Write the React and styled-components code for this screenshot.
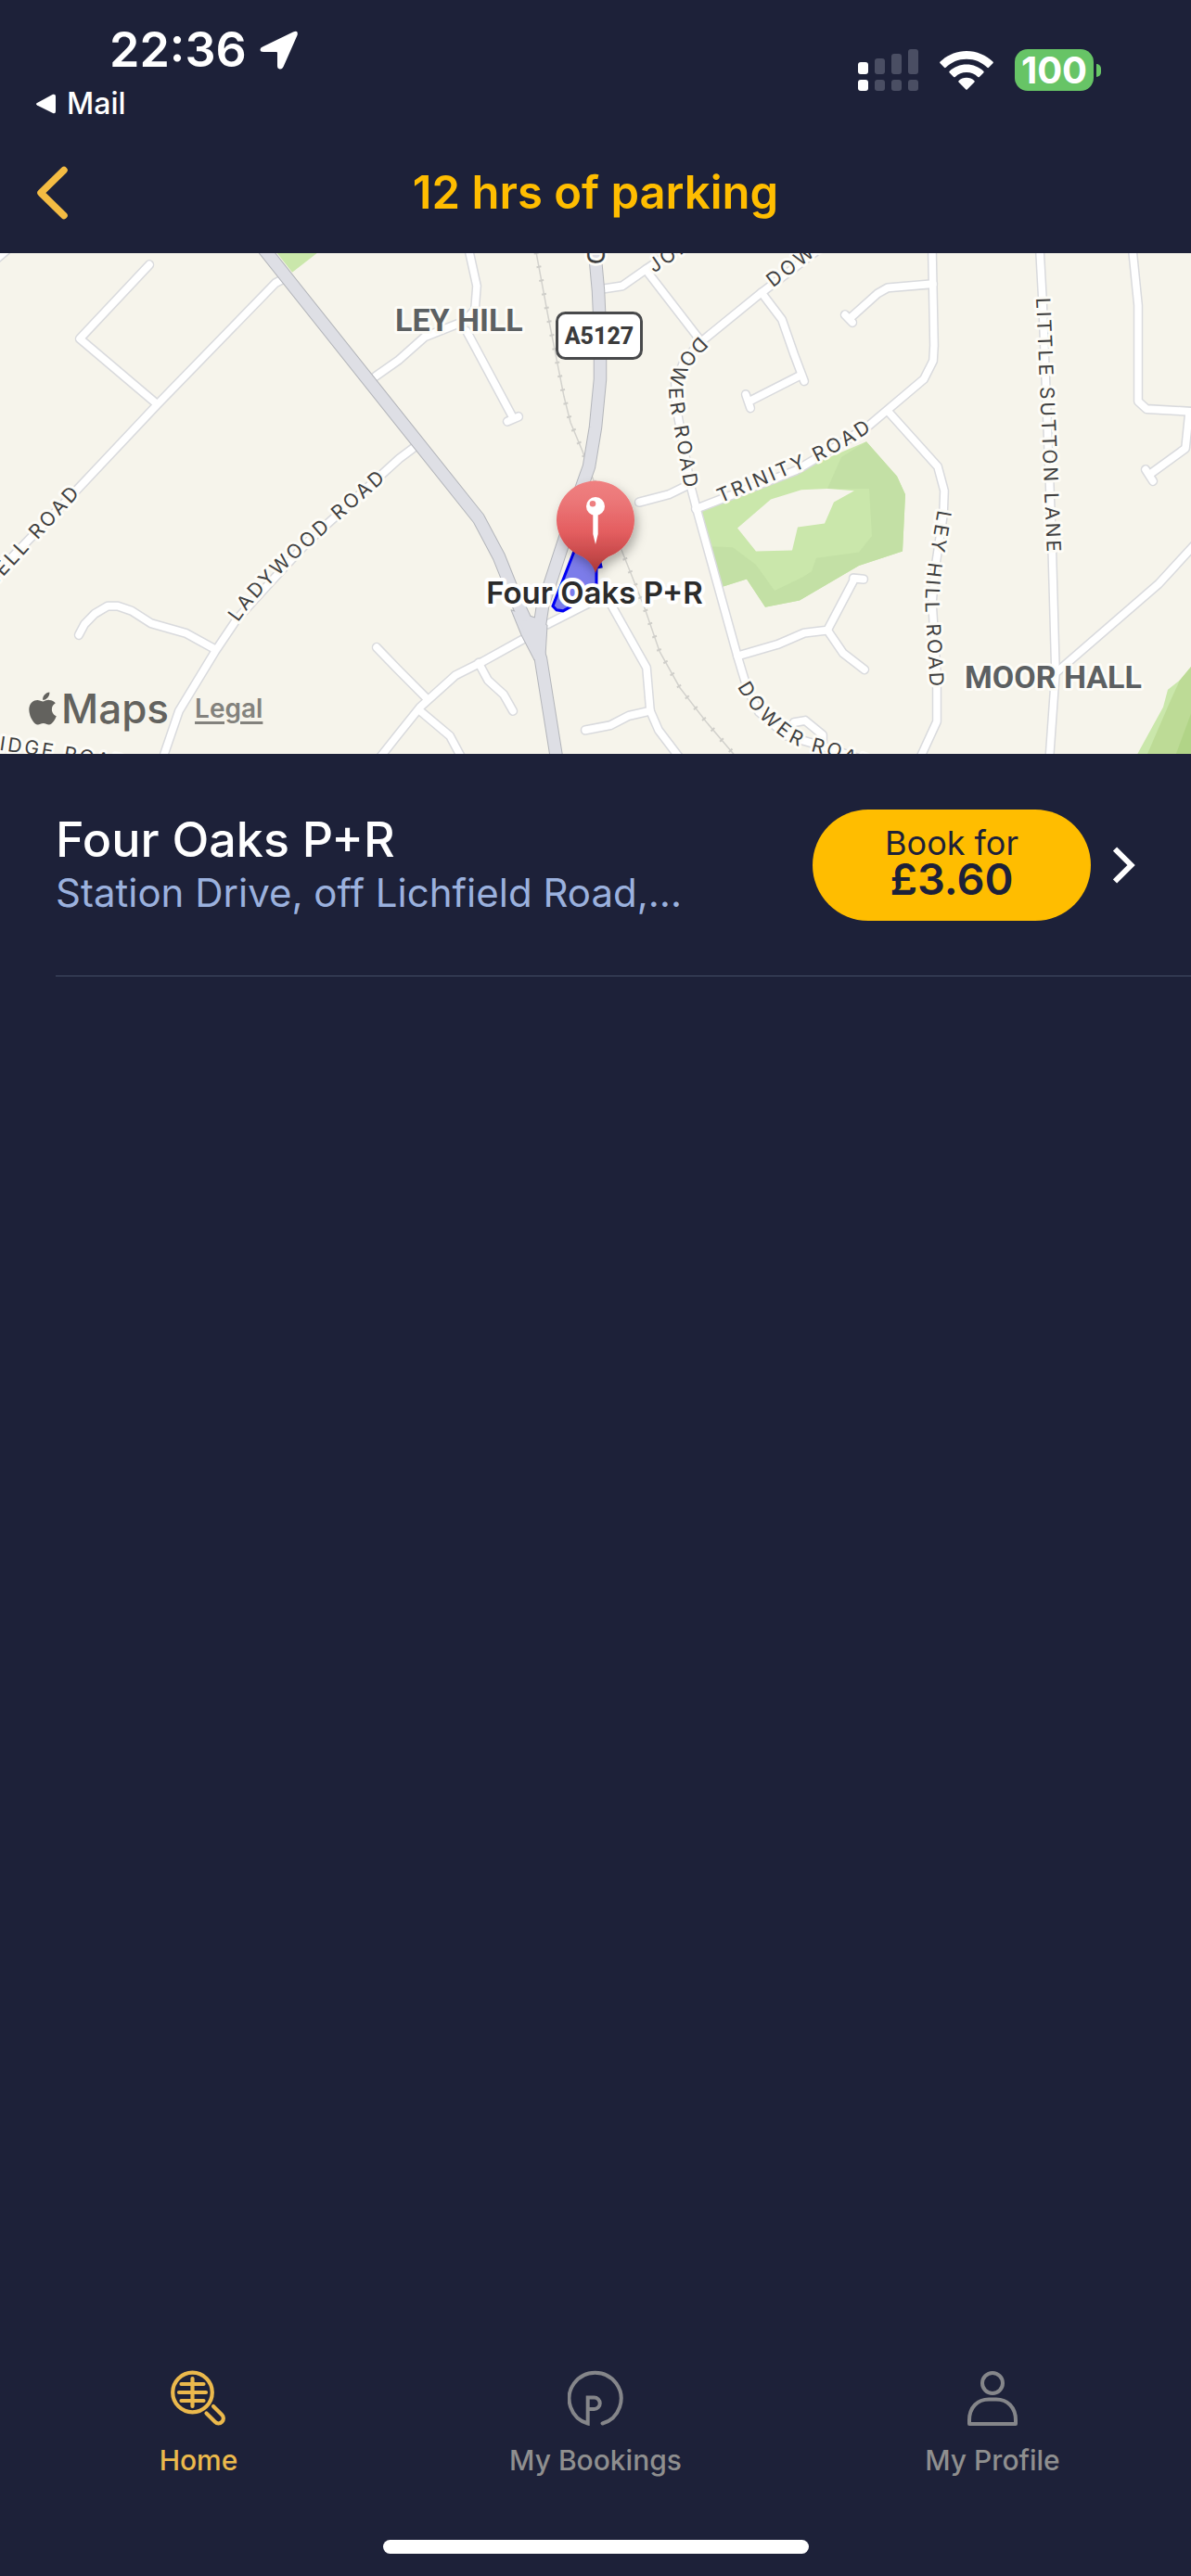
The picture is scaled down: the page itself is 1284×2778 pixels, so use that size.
import React, { useState } from 'react';
import styled, { createGlobalStyle, css } from 'styled-components';
import { FaApple } from 'react-icons/fa';

const GlobalStyle = createGlobalStyle`
    * {
        box-sizing: border-box;
    }
    body {
        margin: 0;
        background: #1d2139;
        font-family: Inter, "Liberation Sans", sans-serif;
    }
    button {
        padding: 0;
        border: none;
        background: none;
        font-family: inherit;
        cursor: pointer;
    }
`;

const Page = styled.div`
    display: flex;
    flex-direction: column;
    min-height: 100vh;
    color: #fff;
`;

const StatusBar = styled.div`
    display: flex;
    justify-content: space-between;
    height: 142px;
    padding: 24px 97px 0 38px;
`;

const StatusLeft = styled.div`
    display: flex;
    flex-direction: column;
    align-items: flex-start;
    gap: 6px;
`;

const Time = styled.div`
    display: flex;
    align-items: center;
    gap: 14px;
    padding-left: 80px;
    font-size: 52px;
    font-weight: 600;
    line-height: 60px;
`;

const BackToApp = styled.button`
    display: flex;
    align-items: center;
    gap: 11px;
    color: #fff;
    font-size: 32px;
    font-weight: 500;
    line-height: 44px;
`;

const StatusRight = styled.div`
    display: flex;
    align-items: center;
    gap: 23px;
    height: 45px;
    margin-top: 29px;
`;

const Battery = styled.div`
    display: flex;
    align-items: center;
    gap: 3px;
`;

const BatteryLevel = styled.div`
    width: 85px;
    height: 45px;
    border-radius: 14px;
    background: #67c466;
    font-size: 40px;
    font-weight: 700;
    line-height: 45px;
    text-align: center;
`;

const BatteryNub = styled.div`
    width: 5px;
    height: 14px;
    border-radius: 0 6px 6px 0;
    background: #67c466;
`;

const NavBar = styled.header`
    display: grid;
    grid-template-columns: 80px 1fr 80px;
    align-items: center;
    height: 131px;
`;

const BackButton = styled.button`
    display: flex;
    padding-left: 38px;
`;

const Title = styled.h1`
    margin: 0;
    color: #ffbd00;
    font-size: 49px;
    font-weight: 600;
    line-height: 60px;
    text-align: center;
`;

const MapBox = styled.section`
    position: relative;
    height: 540px;
    background: #f6f4eb;
    overflow: hidden;
`;

const MapSvg = styled.svg`
    display: block;
    width: 100%;
    height: 100%;
`;

const StreetName = styled.text`
    fill: #3f3f3f;
    font-size: ${props => (props.$major ? '25px' : '21px')};
    font-weight: ${props => (props.$major ? 500 : 400)};
    letter-spacing: 3px;
    stroke: #fdfcf7;
    stroke-width: 6px;
    stroke-linejoin: round;
    paint-order: stroke;
`;

const PlaceName = styled.text`
    fill: #5c6062;
    font-family: "Liberation Sans Narrow", Roboto, sans-serif;
    font-size: 34px;
    font-weight: 700;
    stroke: #fdfcf7;
    stroke-width: 6px;
    stroke-linejoin: round;
    paint-order: stroke;
`;

const RoadNumber = styled.text`
    fill: #3b3b3c;
    font-family: "Liberation Sans Narrow", Roboto, sans-serif;
    font-size: 25px;
    font-weight: 800;
    text-anchor: middle;
`;

const PinName = styled.text`
    fill: #2b2b2b;
    font-size: 33px;
    font-weight: 600;
    text-anchor: middle;
    stroke: #fff;
    stroke-width: 8px;
    stroke-linejoin: round;
    paint-order: stroke;
`;

const Attribution = styled.div`
    position: absolute;
    left: 26px;
    bottom: 22px;
    display: flex;
    align-items: center;
    color: #63625e;
    font-size: 44px;
    font-weight: 500;
    line-height: 54px;
`;

const Legal = styled.a`
    margin-left: 28px;
    color: #83827d;
    font-size: 28px;
    font-weight: 600;
    text-decoration-thickness: 3px;
    text-underline-offset: 4px;
`;

const List = styled.ul`
    flex: 1;
    margin: 0;
    padding: 0;
    list-style: none;
`;

const CarPark = styled.li`
    display: flex;
    align-items: center;
    height: 240px;
    margin-left: 60px;
    padding-right: 60px;
    border-bottom: 1px solid #434e66;
`;

const Info = styled.div`
    flex: 1;
    min-width: 0;
    margin-right: 90px;
`;

const Name = styled.h2`
    margin: 0;
    font-size: 52px;
    font-weight: 500;
    line-height: 60px;
`;

const Address = styled.p`
    margin: 0;
    color: #9bb1de;
    font-size: 42px;
    font-weight: 400;
    line-height: 54px;
    white-space: nowrap;
    overflow: hidden;
    text-overflow: ellipsis;
`;

const BookButton = styled.button`
    display: flex;
    flex-direction: column;
    align-items: center;
    justify-content: center;
    width: 300px;
    height: 120px;
    padding-bottom: 8px;
    border-radius: 60px;
    background: #ffbd00;
    color: #1d2139;
    font-size: 36px;
    line-height: 38px;
`;

const Price = styled.strong`
    font-size: 47px;
    font-weight: 600;
    line-height: 40px;
`;

const MoreButton = styled.button`
    display: flex;
    margin-left: 24px;
`;

const TabBar = styled.nav`
    display: grid;
    grid-template-columns: repeat(3, 1fr);
`;

const Tab = styled.button`
    display: flex;
    flex-direction: column;
    align-items: center;
    gap: 19px;
    color: #8f8f8f;
    font-size: 30px;
    font-weight: 500;
    line-height: 36px;
    svg {
        color: #85868a;
    }
    ${props =>
        props.$active &&
        css`
            color: #ebb94c;
            svg {
                color: #ebb94c;
            }
        `}
`;

const HomeIndicator = styled.div`
    align-self: center;
    width: 459px;
    height: 15px;
    margin: 68px 0 24px;
    border-radius: 8px;
    background: #fff;
`;

const streets = [
    'M-4 7L7 -2',
    'M161 13L86 90L168 157',
    'M305 28L297 32L170 158L82 248L-7 337',
    'M172 550L177 522L193 477L232 415L255 382L287 348L333 300L430 215L445 204',
    'M85 398L91 387L102 376L116 368L127 368L142 373L163 386L200 396L232 413',
    'M405 129L430 112L458 88L500 72L512 60L514 35L506 0',
    'M503 82L553 172',
    'M547 176L559 171',
    'M406 411L428 433L461 465',
    'M410 525L428 503L453 473L491 440L520 426L563 403',
    'M453 477L485 503L500 530',
    'M516 427L526 445L543 460L553 477',
    'M590 387L645 360',
    'M655 360L697 432L701 477L710 497L736 530',
    'M631 497L658 492L678 482L701 477',
    'M689 260L721 252L740 243',
    'M884 -4L821 42L756 93L738 112L728 135L729 160L745 245L751 267L795 420L806 455L818 478L848 503L888 514L930 528',
    'M651 38L671 35L696 18L730 -4',
    'M696 18L756 93',
    'M821 42L843 70L856 106L867 134',
    'M808 155L863 128',
    'M804 148L809 162',
    'M750 267L858 227L905 200L937 180L996 132L1006 113L1007 97L1005 0',
    'M1006 33L957 37L946 43L916 69',
    'M911 65L919 73',
    'M957 165L1011 223L1018 248L1017 273L1008 330L1005 365L1007 395L1010 440L1010 488L990 530',
    'M1121 -2L1124 50L1134 300L1138 437L1130 545',
    'M1140 436L1249 345L1290 302',
    'M1221 -2L1227 55L1227 155L1236 163L1290 166',
    'M1282 167L1278 204L1241 230',
    'M1235 226L1243 238',
    'M795 420L838 408L867 396L892 393L921 340',
    'M920 339L931 340',
    'M892 393L909 417L932 434',
    'M848 502L856 489L868 487L887 502L887 514',
];

const mainRoads = [
    'M284 -4L430 173L516 277L538 317L558 365L574 398L583 423L604 550',
    'M641 -2L645 40L647 83L647 132L642 182L635 223L625 250L585 368L580 400',
];

const rail = 'M578 0L591 67L608 150L615 177L628 207L641 240L671 312L695 370L711 415L733 453L761 488L791 522L800 532';

const labels = [
    { id: 'bushell', d: 'M-190 549L83 254', text: 'BUSHELL ROAD', end: true },
    { id: 'ladywood', d: 'M251 395C283 349 330 312 437 217', text: 'LADYWOOD ROAD' },
    { id: 'bridge', d: 'M-33 525L36 535L144 553', text: 'BRIDGE ROAD' },
    { id: 'jordan', d: 'M701 17L760 -23', text: 'JORDAN' },
    { id: 'dower-top', d: 'M829 33L900 -22', text: 'DOWER' },
    { id: 'dower', d: 'M759 95C736 116 725 135 729 161L750 282', text: 'DOWER ROAD' },
    { id: 'trinity', d: 'M774 264L862 227Q905 208 950 177', text: 'TRINITY ROAD' },
    { id: 'leyhill', d: 'M1018 279L1007 342Q1003 373 1006 404L1011 490', text: 'LEY HILL ROAD' },
    { id: 'sutton', d: 'M1124 49L1137 350', text: 'LITTLE SUTTON LANE' },
    { id: 'dower-low', d: 'M801 465Q815 493 850 519Q866 530 896 536L960 562', text: 'DOWER ROAD' },
];

function Pin() {
    return (
        <g>
            <path
                d="M642 346c-3-9-8-15-17-19a42 42 0 1 1 34 0c-9 4-14 10-17 19z"
                fill="url(#pinFill)"
                filter="url(#pinShadow)"
            />
            <circle cx="642" cy="274" r="10" fill="#fff" />
            <path d="M639.300 282h5.400v22l-2.700 11l-2.700-11z" fill="#fff" />
            <circle cx="639" cy="271.300" r="3.300" fill="#ee7f80" />
        </g>
    );
}

function MapView() {
    return (
        <MapBox>
            <MapSvg viewBox="0 1 1284 540" preserveAspectRatio="xMidYMid slice" role="img" aria-label="Map">
                <defs>
                    <linearGradient id="pinFill" x1="0" y1="0" x2="0" y2="1">
                        <stop offset="0" stopColor="#ef8080" />
                        <stop offset="0.200" stopColor="#ec7879" />
                        <stop offset="0.550" stopColor="#e45e60" />
                        <stop offset="0.800" stopColor="#c84a4b" />
                        <stop offset="1" stopColor="#a83837" />
                    </linearGradient>
                    <filter id="pinShadow" x="-30%" y="-30%" width="170%" height="170%">
                        <feDropShadow dx="3" dy="6" stdDeviation="6" floodColor="#000" floodOpacity="0.300" />
                    </filter>
                </defs>

                <g transform="scale(1 1.037)">
                    <path d="M298 0H343L315 21z" fill="#cae7ab" />
                    <path
                        d="M753 270L858 228L934 197L967 233L976 252L973 311L926 326L862 362L825 369L805 340L778 348L766 307z"
                        fill="#cae7ab"
                    />
                    <path
                        d="M766 306L790 307L815 325L835 352L865 338L875 332L880 318L926 312L940 295L937 246L892 246L907 213L934 197L967 233L976 252L973 311L926 326L862 362L825 369L805 340L778 348z"
                        fill="#c3e0a5"
                    />
                    <path
                        d="M795 287L831 257L864 247L892 246L921 248L899 260L889 282L860 286L854 310L815 311z"
                        fill="#f6f4eb"
                    />
                    <path d="M1225 524L1254 473L1259 455L1272 445L1290 424V545z" fill="#cae7ab" />
                    <path d="M1236 524L1262 466L1272 445L1290 424V545z" fill="#bddb96" />
                    <path d="M1259 545L1290 464V545z" fill="#b1d487" />

                    <g fill="none" strokeLinejoin="round">
                        <path d={rail} stroke="#d3d2cd" strokeWidth="1.500" />
                        <path d={rail} stroke="#cfcec9" strokeWidth="5" strokeDasharray="2 12.500" />
                        <g strokeLinecap="round">
                            {streets.map(d => <path key={d} d={d} stroke="#d9dadd" strokeWidth="10.500" />)}
                            {streets.map(d => <path key={d} d={d} stroke="#fff" strokeWidth="7.500" />)}
                        </g>
                        {mainRoads.map(d => <path key={d} d={d} stroke="#b3b5ba" strokeWidth="14.500" />)}
                        <path d="M551 372L577 380L590 388L588 420L576 424L562 398z" fill="#dedfe5" stroke="#b3b5ba" />
                        {mainRoads.map(d => <path key={d} d={d} stroke="#dedfe5" strokeWidth="12.500" />)}
                    </g>
                    <path d="M562 384L577 381L587 388L585 416L576 418z" fill="#dedfe5" />

                    <path
                        d="M621 306L596 368L600 372L607 373L611 371L643 353V328L648 327L643 306z"
                        fill="#7c7cea"
                        stroke="#0000f5"
                        strokeWidth="3"
                    />
                </g>

                {labels.map(({ id, d, text, end }) => (
                    <React.Fragment key={id}>
                        <path id={id} d={d} fill="none" />
                        <StreetName dy="7" textAnchor={end ? 'end' : 'start'}>
                            <textPath href={`#${id}`} startOffset={end ? '100%' : '0'}>{text}</textPath>
                        </StreetName>
                    </React.Fragment>
                ))}
                <StreetName $major transform="translate(633 -5) rotate(90)">D</StreetName>
                <PlaceName x="426" y="85">LEY HILL</PlaceName>
                <PlaceName x="1040" y="470">MOOR HALL</PlaceName>

                <rect x="600.500" y="65.500" width="91" height="49" rx="9" fill="#fff" stroke="#48494b" strokeWidth="3" />
                <RoadNumber x="646" y="99">A5127</RoadNumber>

                <PinName x="641" y="379">Four Oaks P+R</PinName>
                <Pin />
            </MapSvg>
            <Attribution>
                <FaApple size={40} />
                Maps
                <Legal href="#legal">Legal</Legal>
            </Attribution>
        </MapBox>
    );
}

function SignalIcon() {
    const bars = [[0, 14], [18, 10], [36, 5], [54, 0]];
    return (
        <svg width="65" height="45" viewBox="0 0 65 45">
            {bars.map(([x, y], i) => (
                <g key={x} fill={i === 0 ? '#fff' : '#4a4e63'}>
                    <rect x={x} y={y} width="11" height={27 - y} rx="3" />
                    <rect x={x} y="33" width="11" height="12" rx="3" />
                </g>
            ))}
        </svg>
    );
}

function WifiIcon() {
    return (
        <svg width="58" height="42" viewBox="0 0 58 42" fill="#fff">
            <path d="M29 0C18 0 8 4.500 0.600 11.600a1.200 1.200 0 0 0 0 1.700L5 17.700a1.200 1.200 0 0 0 1.700 0C12.500 12 20.300 8.700 29 8.700s16.500 3.300 22.300 9a1.200 1.200 0 0 0 1.700 0l4.400-4.400a1.200 1.200 0 0 0 0-1.700C50 4.500 40 0 29 0z" />
            <path d="M29 14.500c-7 0-13.500 2.700-18.300 7.200a1.200 1.200 0 0 0 0 1.800l4.400 4.400a1.200 1.200 0 0 0 1.700 0C20 24.900 24.300 23.100 29 23.100s9 1.800 12.200 4.800a1.200 1.200 0 0 0 1.700 0l4.400-4.400a1.200 1.200 0 0 0 0-1.800C42.500 17.200 36 14.500 29 14.500z" />
            <path d="M29 28.800c-3.200 0-6.100 1.200-8.300 3.100a1.200 1.200 0 0 0 0 1.800l7.400 7.500a1.200 1.200 0 0 0 1.800 0l7.400-7.500a1.200 1.200 0 0 0 0-1.800C35.100 30 32.200 28.800 29 28.800z" />
        </svg>
    );
}

function HomeIcon() {
    return (
        <svg width="60" height="60" viewBox="0 0 60 60" fill="none" stroke="currentColor" strokeWidth="4.200" strokeLinecap="round">
            <circle cx="23.500" cy="24" r="21.300" />
            <path d="M11.500 15H35.500M9 24H38M11.500 33H35.500M23.500 9V39" />
            <path d="M46 39L55.300 48.300a5.200 5.200 0 0 1 -7.500 7.500L38.500 46.500" />
        </svg>
    );
}

function BookingsIcon() {
    return (
        <svg width="60" height="60" viewBox="0 0 60 60" fill="none" stroke="currentColor" strokeWidth="4" strokeLinecap="round">
            <path d="M37.500 57.500A28 28 0 1 0 21.700 57.500V29.500H28.500a6 6 0 0 1 0 12.500H21.700" />
        </svg>
    );
}

function ProfileIcon() {
    return (
        <svg width="60" height="60" viewBox="0 0 60 60" fill="none" stroke="currentColor" strokeWidth="4" strokeLinejoin="round">
            <circle cx="30" cy="14" r="11" />
            <path d="M5 58V54C5 40 14 31.500 26 31.500H34C46 31.500 55 40 55 54V58z" />
        </svg>
    );
}

const tabs = [
    { name: 'Home', Icon: HomeIcon },
    { name: 'My Bookings', Icon: BookingsIcon },
    { name: 'My Profile', Icon: ProfileIcon },
];

function App() {
    const [active, setActive] = useState('Home');

    return (
        <Page>
            <GlobalStyle />
            <StatusBar>
                <StatusLeft>
                    <Time>
                        22:36
                        <svg width="42" height="42" viewBox="0 0 42 42">
                            <path d="M3 17.500L36 1.500Q42 -1 40.500 5L25.500 39Q24 42 21.500 41.500Q19 41 19 38V24Q19 23 18 23H4Q0.500 23 0.500 20.500Q0.500 18.700 3 17.500z" fill="#fff" />
                        </svg>
                    </Time>
                    <BackToApp>
                        <svg width="23" height="22" viewBox="0 0 23 22">
                            <path d="M2 10L19 0.800Q22 0 22 3V19Q22 22 19 21L2 12.500Q0 11.200 2 10z" fill="#fff" />
                        </svg>
                        Mail
                    </BackToApp>
                </StatusLeft>
                <StatusRight>
                    <SignalIcon />
                    <WifiIcon />
                    <Battery>
                        <BatteryLevel>100</BatteryLevel>
                        <BatteryNub />
                    </Battery>
                </StatusRight>
            </StatusBar>
            <NavBar>
                <BackButton aria-label="Back">
                    <svg width="38" height="58" viewBox="0 0 38 58" fill="none" stroke="#f4bc43" strokeWidth="7.500" strokeLinecap="round" strokeLinejoin="round">
                        <path d="M31 4.500L6 29L31 53.500" />
                    </svg>
                </BackButton>
                <Title>12 hrs of parking</Title>
            </NavBar>
            <MapView />
            <List>
                <CarPark>
                    <Info>
                        <Name>Four Oaks P+R</Name>
                        <Address>Station Drive, off Lichfield Road,…</Address>
                    </Info>
                    <BookButton>
                        Book for
                        <Price>£3.60</Price>
                    </BookButton>
                    <MoreButton aria-label="Details">
                        <svg width="24" height="40" viewBox="0 0 24 40" fill="none" stroke="#fff" strokeWidth="6">
                            <path d="M2 2.500L19.500 20L2 37.500" />
                        </svg>
                    </MoreButton>
                </CarPark>
            </List>
            <TabBar>
                {tabs.map(({ name, Icon }) => (
                    <Tab key={name} $active={name === active} onClick={() => setActive(name)}>
                        <Icon />
                        {name}
                    </Tab>
                ))}
            </TabBar>
            <HomeIndicator />
        </Page>
    );
}

export default App;
